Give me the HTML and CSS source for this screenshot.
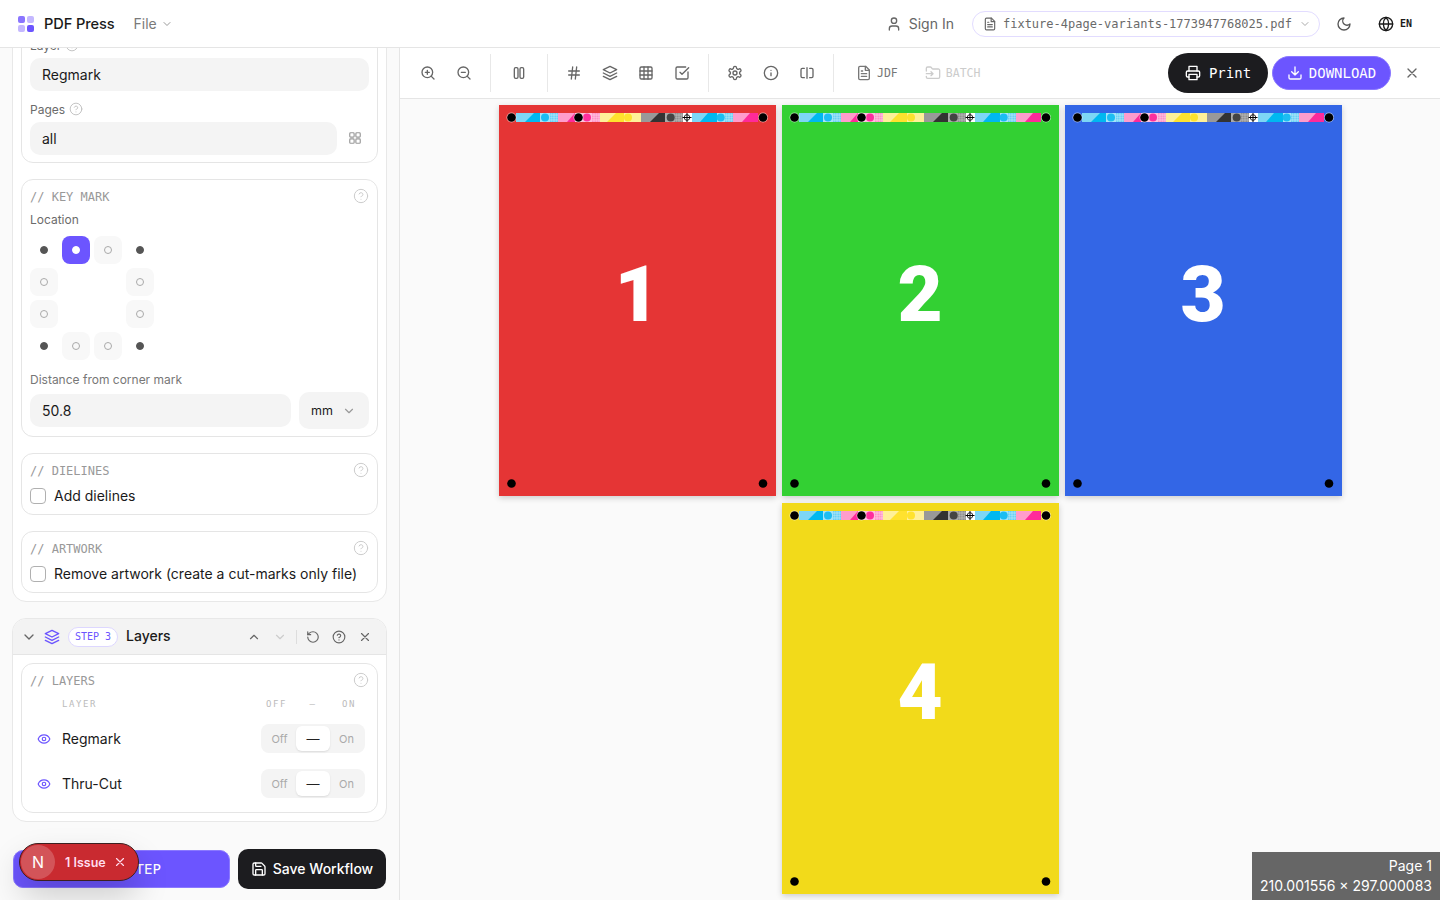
FILE: index.html
```html
<!DOCTYPE html>
<html lang="en">
<head>
<meta charset="utf-8">
<title>PDF Press</title>
<link rel="stylesheet" href="styles.css">
</head>
<body>
<svg class="sprite" xmlns="http://www.w3.org/2000/svg">
  <defs>
    <pattern id="ht-c" width="2.5" height="2.5" patternUnits="userSpaceOnUse"><rect width="2.5" height="2.5" fill="#a6e3f8"/><circle cx="1.25" cy="1.25" r="0.9" fill="#4cc9f5"/></pattern>
    <pattern id="ht-m" width="2.5" height="2.5" patternUnits="userSpaceOnUse"><rect width="2.5" height="2.5" fill="#ffc0de"/><circle cx="1.25" cy="1.25" r="0.9" fill="#ff7dbd"/></pattern>
    <pattern id="ht-k" width="2.5" height="2.5" patternUnits="userSpaceOnUse"><rect width="2.5" height="2.5" fill="#b4b4b4"/><circle cx="1.25" cy="1.25" r="0.9" fill="#7e7e7e"/></pattern>
  </defs>
  <symbol id="i-zoom-in" viewBox="0 0 24 24"><circle cx="11" cy="11" r="8"/><path d="m21 21-4.35-4.35M11 8v6M8 11h6"/></symbol>
  <symbol id="i-zoom-out" viewBox="0 0 24 24"><circle cx="11" cy="11" r="8"/><path d="m21 21-4.35-4.35M8 11h6"/></symbol>
  <symbol id="i-cols" viewBox="0 0 24 24"><rect x="5" y="4" width="5.5" height="16" rx="2"/><rect x="13.5" y="4" width="5.5" height="16" rx="2"/></symbol>
  <symbol id="i-hash" viewBox="0 0 24 24"><path d="M4 9h16M4 15h16M10 3 8 21M16 3l-2 18"/></symbol>
  <symbol id="i-layers" viewBox="0 0 24 24"><path d="M12 2 2 7l10 5 10-5-10-5z"/><path d="m2 17 10 5 10-5"/><path d="m2 12 10 5 10-5"/></symbol>
  <symbol id="i-table" viewBox="0 0 24 24"><rect x="3" y="3" width="18" height="18" rx="2"/><path d="M3 9h18M3 15h18M9 3v18M15 3v18"/></symbol>
  <symbol id="i-check" viewBox="0 0 24 24"><path d="M21 10.5V19a2 2 0 0 1-2 2H5a2 2 0 0 1-2-2V5a2 2 0 0 1 2-2h12.5"/><path d="m9 11 3 3L22 4"/></symbol>
  <symbol id="i-gear" viewBox="0 0 24 24"><path d="M12.22 2h-.44a2 2 0 0 0-2 2v.18a2 2 0 0 1-1 1.73l-.43.25a2 2 0 0 1-2 0l-.15-.08a2 2 0 0 0-2.73.73l-.22.38a2 2 0 0 0 .73 2.73l.15.1a2 2 0 0 1 1 1.72v.51a2 2 0 0 1-1 1.74l-.15.09a2 2 0 0 0-.73 2.73l.22.38a2 2 0 0 0 2.73.73l.15-.08a2 2 0 0 1 2 0l.43.25a2 2 0 0 1 1 1.73V20a2 2 0 0 0 2 2h.44a2 2 0 0 0 2-2v-.18a2 2 0 0 1 1-1.73l.43-.25a2 2 0 0 1 2 0l.15.08a2 2 0 0 0 2.73-.73l.22-.39a2 2 0 0 0-.73-2.73l-.15-.08a2 2 0 0 1-1-1.74v-.5a2 2 0 0 1 1-1.74l.15-.09a2 2 0 0 0 .73-2.73l-.22-.38a2 2 0 0 0-2.73-.73l-.15.08a2 2 0 0 1-2 0l-.43-.25a2 2 0 0 1-1-1.73V4a2 2 0 0 0-2-2z"/><circle cx="12" cy="12" r="3"/></symbol>
  <symbol id="i-info" viewBox="0 0 24 24"><circle cx="12" cy="12" r="10"/><path d="M12 16v-4M12 8h.01"/></symbol>
  <symbol id="i-split" viewBox="0 0 24 24"><path d="M8 19H5c-1 0-2-1-2-2V7c0-1 1-2 2-2h3"/><path d="M16 5h3c1 0 2 1 2 2v10c0 1-1 2-2 2h-3"/><path d="M12 4v16"/></symbol>
  <symbol id="i-file" viewBox="0 0 24 24"><path d="M14.5 2H6a2 2 0 0 0-2 2v16a2 2 0 0 0 2 2h12a2 2 0 0 0 2-2V7.5L14.5 2z"/><path d="M14 2v6h6M16 13H8M16 17H8M10 9H8"/></symbol>
  <symbol id="i-batch" viewBox="0 0 24 24"><path d="M2 9V5a2 2 0 0 1 2-2h3.9a2 2 0 0 1 1.69.9l.81 1.2a2 2 0 0 0 1.67.9H20a2 2 0 0 1 2 2v10a2 2 0 0 1-2 2H4a2 2 0 0 1-2-2v-1"/><path d="M2 13h10M9 16l3-3-3-3"/></symbol>
  <symbol id="i-printer" viewBox="0 0 24 24"><path d="M6 9V2h12v7"/><path d="M6 18H4a2 2 0 0 1-2-2v-5a2 2 0 0 1 2-2h16a2 2 0 0 1 2 2v5a2 2 0 0 1-2 2h-2"/><rect x="6" y="14" width="12" height="8"/></symbol>
  <symbol id="i-download" viewBox="0 0 24 24"><path d="M21 15v4a2 2 0 0 1-2 2H5a2 2 0 0 1-2-2v-4"/><path d="m7 10 5 5 5-5M12 15V3"/></symbol>
  <symbol id="i-x" viewBox="0 0 24 24"><path d="M18 6 6 18M6 6l12 12"/></symbol>
  <symbol id="i-user" viewBox="0 0 24 24"><path d="M19 21v-2a4 4 0 0 0-4-4H9a4 4 0 0 0-4 4v2"/><circle cx="12" cy="7" r="4"/></symbol>
  <symbol id="i-moon" viewBox="0 0 24 24"><path d="M12 3a6 6 0 0 0 9 9 9 9 0 1 1-9-9Z"/></symbol>
  <symbol id="i-globe" viewBox="0 0 24 24"><circle cx="12" cy="12" r="10"/><path d="M12 2a14.5 14.5 0 0 0 0 20 14.5 14.5 0 0 0 0-20M2 12h20"/></symbol>
  <symbol id="i-down" viewBox="0 0 24 24"><path d="m6 9 6 6 6-6"/></symbol>
  <symbol id="i-up" viewBox="0 0 24 24"><path d="m18 15-6-6-6 6"/></symbol>
  <symbol id="i-reset" viewBox="0 0 24 24"><path d="M3 12a9 9 0 1 0 9-9 9.75 9.75 0 0 0-6.74 2.74L3 8"/><path d="M3 3v5h5"/></symbol>
  <symbol id="i-help" viewBox="0 0 24 24"><circle cx="12" cy="12" r="10"/><path d="M9.09 9a3 3 0 0 1 5.83 1c0 2-3 3-3 3M12 17h.01"/></symbol>
  <symbol id="i-eye" viewBox="0 0 24 24"><path d="M2 12s3-7 10-7 10 7 10 7-3 7-10 7-10-7-10-7Z"/><circle cx="12" cy="12" r="3"/></symbol>
  <symbol id="i-save" viewBox="0 0 24 24"><path d="M15.2 3a2 2 0 0 1 1.4.6l3.8 3.8a2 2 0 0 1 .6 1.4V19a2 2 0 0 1-2 2H5a2 2 0 0 1-2-2V5a2 2 0 0 1 2-2z"/><path d="M17 21v-7a1 1 0 0 0-1-1H8a1 1 0 0 0-1 1v7M7 3v4a1 1 0 0 0 1 1h7"/></symbol>
  <symbol id="i-grid" viewBox="0 0 24 24"><rect x="3" y="3" width="7.5" height="7.5" rx="1.5"/><rect x="13.5" y="3" width="7.5" height="7.5" rx="1.5"/><rect x="3" y="13.5" width="7.5" height="7.5" rx="1.5"/><rect x="13.5" y="13.5" width="7.5" height="7.5" rx="1.5"/></symbol>
  <symbol id="marks" viewBox="0 0 277 391">
    <g stroke="none">
      <rect x="41" y="8" width="10" height="9" fill="#a6e3f8"/><rect x="76" y="8" width="17" height="9" fill="#ffc0de"/><rect x="125" y="8" width="8" height="9" fill="#fff099"/><rect x="166" y="8" width="10" height="9" fill="#aaa"/><rect x="218" y="8" width="8" height="9" fill="#a6e3f8"/>
      <rect x="17" y="8" width="9" height="9" fill="#7dd6f5"/><rect x="26" y="8" width="15" height="9" fill="#7dd6f5"/><path d="M26 17l9-9h6v9z" fill="#00b8f0"/>
      <circle cx="46" cy="12.5" r="4" fill="#1cbdf2"/><rect x="51" y="8" width="8" height="9" fill="url(#ht-c)"/>
      <rect x="59" y="8" width="17" height="9" fill="#ff9ccc"/><path d="M68 17l8-9v9z" fill="#ff2a9a"/>
      <circle cx="88" cy="12.5" r="4" fill="#ff2f9e"/><rect x="93" y="8" width="8" height="9" fill="url(#ht-m)"/>
      <rect x="101" y="8" width="16" height="9" fill="#fff099"/><path d="M108 17l9-9v9z" fill="#ffe22e"/><rect x="117" y="8" width="8" height="9" fill="#ffe22e"/>
      <circle cx="129" cy="12.5" r="4" fill="#ffe22e"/><rect x="133" y="8" width="9" height="9" fill="#fff099"/>
      <rect x="142" y="8" width="24" height="9" fill="#999"/><path d="M151 17l9-9h6v9z" fill="#333"/>
      <circle cx="171.7" cy="12.5" r="4" fill="#444"/><rect x="176" y="8" width="8" height="9" fill="url(#ht-k)"/>
      <rect x="184" y="8" width="9" height="9" fill="#fff"/>
      <rect x="193" y="8" width="16" height="9" fill="#7dd6f5"/><path d="M201 17l8-9v9z" fill="#00b8f0"/><rect x="209" y="8" width="9" height="9" fill="#00b8f0"/>
      <circle cx="221.7" cy="12.5" r="4" fill="#1cbdf2"/><rect x="226" y="8" width="8" height="9" fill="url(#ht-c)"/>
      <rect x="234" y="8" width="17" height="9" fill="#ff9ccc"/><path d="M243 17l8-9v9z" fill="#ff2a9a"/><rect x="251" y="8" width="8" height="9" fill="#ff2a9a"/>
      <circle cx="12.5" cy="12.5" r="5" fill="#fff" fill-opacity=".55"/><circle cx="79.5" cy="12.5" r="5" fill="#fff" fill-opacity=".55"/><circle cx="264" cy="12.5" r="5" fill="#fff" fill-opacity=".55"/>
      <circle cx="12.5" cy="12.5" r="4.3" fill="#000"/><circle cx="79.5" cy="12.5" r="4.3" fill="#000"/><circle cx="264" cy="12.5" r="4.3" fill="#000"/>
      <circle cx="12.5" cy="378.5" r="4.3" fill="#000"/><circle cx="264" cy="378.5" r="4.3" fill="#000"/>
    </g>
    <circle cx="188" cy="12.5" r="2.8" fill="none" stroke="#000" stroke-width=".8"/>
    <path d="M183.5 12.5h9M188 8v9" stroke="#000" stroke-width="1" fill="none"/>
  </symbol>
</svg>

<header class="topbar">
  <div class="logo">
    <span class="logo-c a"></span><span class="logo-c b"></span><span class="logo-c b"></span><span class="logo-c a2"></span>
  </div>
  <span class="brand">PDF Press</span>
  <button class="file-menu">File <svg class="ic ic12"><use href="#i-down"/></svg></button>
  <div class="topbar-right">
    <button class="signin"><svg class="ic ic16"><use href="#i-user"/></svg>Sign In</button>
    <div class="file-pill">
      <svg class="ic ic14"><use href="#i-file"/></svg>
      <span class="file-name">fixture-4page-variants-1773947768025.pdf</span>
      <svg class="ic ic12"><use href="#i-down"/></svg>
    </div>
    <svg class="ic ic16 moon"><use href="#i-moon"/></svg>
    <div class="lang"><svg class="ic ic16"><use href="#i-globe"/></svg><span>EN</span></div>
  </div>
</header>

<main class="layout">
  <aside class="side">
    <div class="side-scroll">
      <div class="side-inner">
        <section class="panel panel-body">
          <div class="card">
            <div class="card-title"><span>// REG MARK</span></div>
            <div class="label label-first">Layer <svg class="ic help-s"><use href="#i-help"/></svg></div>
            <div class="input">Regmark</div>
            <div class="label label-pages">Pages <svg class="ic help-s"><use href="#i-help"/></svg></div>
            <div class="row-input">
              <div class="input grow">all</div>
              <svg class="ic ic16 grid-ic"><use href="#i-grid"/></svg>
            </div>
          </div>

          <div class="card">
            <div class="card-title"><span>// KEY MARK</span><svg class="ic help-l"><use href="#i-help"/></svg></div>
            <div class="label label-loc">Location</div>
            <div class="loc-grid">
              <span class="loc fixed"><i></i></span><span class="loc on"><i></i></span><span class="loc"><i></i></span><span class="loc fixed"><i></i></span>
              <span class="loc"><i></i></span><span class="loc none"></span><span class="loc none"></span><span class="loc"><i></i></span>
              <span class="loc"><i></i></span><span class="loc none"></span><span class="loc none"></span><span class="loc"><i></i></span>
              <span class="loc fixed"><i></i></span><span class="loc"><i></i></span><span class="loc"><i></i></span><span class="loc fixed"><i></i></span>
            </div>
            <div class="label label-dist">Distance from corner mark</div>
            <div class="row-dist">
              <div class="input grow">50.8</div>
              <div class="select">mm <svg class="ic ic14"><use href="#i-down"/></svg></div>
            </div>
          </div>

          <div class="card">
            <div class="card-title"><span>// DIELINES</span><svg class="ic help-l"><use href="#i-help"/></svg></div>
            <div class="check-row"><span class="checkbox"></span><span class="check-text">Add dielines</span></div>
          </div>

          <div class="card">
            <div class="card-title"><span>// ARTWORK</span><svg class="ic help-l"><use href="#i-help"/></svg></div>
            <div class="check-row"><span class="checkbox"></span><span class="check-text">Remove artwork (create a cut-marks only file)</span></div>
          </div>
        </section>

        <section class="panel step">
          <div class="step-head">
            <svg class="ic ic16 chev"><use href="#i-down"/></svg>
            <svg class="ic ic16 violet"><use href="#i-layers"/></svg>
            <span class="step-pill">STEP&nbsp;3</span>
            <span class="step-name">Layers</span>
            <span class="step-actions">
              <svg class="ic ic14"><use href="#i-up"/></svg>
              <svg class="ic ic14 faint"><use href="#i-down"/></svg>
              <span class="mini-sep"></span>
              <svg class="ic ic14"><use href="#i-reset"/></svg>
              <svg class="ic ic14"><use href="#i-help"/></svg>
              <svg class="ic ic14"><use href="#i-x"/></svg>
            </span>
          </div>
          <div class="step-body">
            <div class="card card-layers">
              <div class="card-title"><span>// LAYERS</span><svg class="ic help-l"><use href="#i-help"/></svg></div>
              <div class="layer-head">
                <span class="lh-name">LAYER</span>
                <span class="lh-off">OFF</span><span class="lh-dash">–</span><span class="lh-on">ON</span>
              </div>
              <div class="layer-rows">
                <div class="layer-row">
                  <svg class="ic ic14 violet"><use href="#i-eye"/></svg>
                  <span class="layer-name">Regmark</span>
                  <div class="tri"><span>Off</span><b>—</b><span>On</span></div>
                </div>
                <div class="layer-row">
                  <svg class="ic ic14 violet"><use href="#i-eye"/></svg>
                  <span class="layer-name">Thru-Cut</span>
                  <div class="tri"><span>Off</span><b>—</b><span>On</span></div>
                </div>
              </div>
            </div>
          </div>
        </section>
      </div>
    </div>
    <div class="side-foot">
      <button class="btn-next">NEXT STEP</button>
      <button class="btn-save"><svg class="ic ic16"><use href="#i-save"/></svg>Save Workflow</button>
    </div>
    <div class="issue">
      <span class="issue-n">N</span>
      <span class="issue-t">1 Issue</span>
      <svg class="ic ic14"><use href="#i-x"/></svg>
    </div>
  </aside>

  <div class="work">
    <div class="toolbar">
      <div class="tg"><button class="tb"><svg class="ic ic16"><use href="#i-zoom-in"/></svg></button><button class="tb"><svg class="ic ic16"><use href="#i-zoom-out"/></svg></button></div>
      <span class="sep"></span>
      <div class="tg tg-pad"><button class="tb"><svg class="ic ic16"><use href="#i-cols"/></svg></button></div>
      <span class="sep"></span>
      <div class="tg"><button class="tb"><svg class="ic ic16"><use href="#i-hash"/></svg></button><button class="tb"><svg class="ic ic16"><use href="#i-layers"/></svg></button><button class="tb"><svg class="ic ic16"><use href="#i-table"/></svg></button><button class="tb"><svg class="ic ic16"><use href="#i-check"/></svg></button></div>
      <span class="sep"></span>
      <div class="tg"><button class="tb"><svg class="ic ic16"><use href="#i-gear"/></svg></button><button class="tb"><svg class="ic ic16"><use href="#i-info"/></svg></button><button class="tb"><svg class="ic ic16"><use href="#i-split"/></svg></button></div>
      <span class="sep"></span>
      <button class="tt jdf"><svg class="ic ic16"><use href="#i-file"/></svg>JDF</button>
      <button class="tt batch"><svg class="ic ic16"><use href="#i-batch"/></svg>BATCH</button>
      <div class="tool-right">
        <button class="btn-print"><svg class="ic ic16"><use href="#i-printer"/></svg>Print</button>
        <button class="btn-dl"><svg class="ic ic16"><use href="#i-download"/></svg>DOWNLOAD</button>
        <button class="tb tb-x"><svg class="ic ic16"><use href="#i-x"/></svg></button>
      </div>
    </div>
    <div class="canvas">
      <div class="pages">
        <div class="page red"><svg class="marks"><use href="#marks"/></svg><span>1</span></div>
        <div class="page green"><svg class="marks"><use href="#marks"/></svg><span>2</span></div>
        <div class="page blue"><svg class="marks"><use href="#marks"/></svg><span>3</span></div>
        <div class="page yellow col2"><svg class="marks"><use href="#marks"/></svg><span>4</span></div>
      </div>
      <div class="page-info">Page 1<br>210.001556 × 297.000083</div>
    </div>
  </div>
</main>
</body>
</html>
```
FILE: styles.css
```css
* { box-sizing: border-box; }
html, body { margin: 0; height: 100%; overflow: hidden; }
body { font-family: Inter, "Liberation Sans", sans-serif; font-size: 14px; color: #1a1a1a; background: #fafafa; display: flex; flex-direction: column; width: 1440px; height: 900px; }
button { font: inherit; border: 0; background: none; padding: 0; color: inherit; }
.sprite { width: 0; height: 0; position: absolute; }
.ic { fill: none; stroke: currentColor; stroke-width: 2; stroke-linecap: round; stroke-linejoin: round; flex: none; display: block; }
.ic12 { width: 12px; height: 12px; }
.ic14 { width: 14px; height: 14px; }
.ic16 { width: 16px; height: 16px; }
.ic18 { width: 18px; height: 18px; }
.violet { color: #6c55ff; }

/* top bar */
.topbar { height: 48px; flex: none; background: #fff; border-bottom: 1px solid #e5e5e5; display: flex; align-items: center; padding-left: 18px; }
.logo { width: 16px; height: 16px; display: grid; grid-template-columns: 7px 7px; gap: 2px; margin-right: 10px; }
.logo-c { border-radius: 2px; width: 7px; height: 7px; }
.logo-c.a { background: #8a75ff; }
.logo-c.b { background: #c4b8ff; }
.logo-c.a2 { background: #6c55ff; }
.brand { font-weight: 500; font-size: 14.6px; letter-spacing: -.1px; color: #1a1a1a; margin-right: 19px; }
.file-menu { display: flex; align-items: center; gap: 4px; color: #7a7a7a; font-size: 14px; }
.file-menu .ic { color: #999; }
.topbar-right { margin-left: auto; display: flex; align-items: center; padding-right: 28px; }
.signin { display: flex; align-items: center; gap: 7px; color: #666; font-size: 14px; margin-right: 18px; }
.file-pill { width: 348px; height: 26px; border: 1.5px solid #e2dcff; border-radius: 13px; display: flex; align-items: center; padding-left: 10px; color: #666; background: #fff; }
.file-name { font-family: "DejaVu Sans Mono", monospace; font-size: 12px; margin: 0 7px 0 6px; color: #6a6a6a; white-space: nowrap; }
.file-pill .ic12 { color: #aaa; }
.moon { color: #555; margin-left: 16px; }
.lang { display: flex; align-items: center; gap: 6px; margin-left: 26px; color: #1a1a1a; }
.lang span { font-family: "DejaVu Sans Mono", monospace; font-size: 10px; font-weight: 700; }

/* layout */
.layout { flex: 1; display: flex; min-height: 0; }
.side { width: 400px; flex: none; border-right: 1px solid #e5e5e5; background: #fafafa; display: flex; flex-direction: column; position: relative; }
.side-scroll { flex: 1; overflow: hidden; min-height: 0; padding: 0 12px 0 12px; }
.side-inner { margin-top: -52px; display: flex; flex-direction: column; gap: 16px; }
.panel { background: #fff; border: 1px solid #e8e8e8; border-radius: 14px; overflow: hidden; width: 375px; }
.panel-body { padding: 8px; display: flex; flex-direction: column; gap: 16px; }
.card { border: 1px solid #e5e5e5; border-radius: 12px; background: #fff; padding: 8px 8px 7px; }
.card-title { height: 18px; display: flex; align-items: center; justify-content: space-between; font-family: "DejaVu Sans Mono", monospace; font-size: 12px; color: #999; }
.help-l { width: 16px; height: 16px; color: #ccc; stroke-width: 1.5; margin-bottom: 2px; }
.help-s { width: 14px; height: 14px; color: #bbb; stroke-width: 1.5; margin-left: 4px; }
.label { height: 16px; padding-bottom: 2px; display: flex; align-items: center; font-size: 12px; color: #6b6b6b; }
.label-first { margin-top: 6px; margin-bottom: 4px; }
.label-pages { margin-top: 11px; margin-bottom: 4px; }
.label-loc { margin-top: 6px; margin-bottom: 8px; }
.label-dist { margin-top: 12px; margin-bottom: 4px; color: #777; }
.input { height: 33px; border-radius: 10px; background: #f4f4f4; display: flex; align-items: center; padding-left: 12px; font-size: 14px; color: #1a1a1a; }
.grow { flex: 1; }
.row-input { display: flex; align-items: center; gap: 10px; }
.grid-ic { width: 14px; height: 14px; color: #999; margin: 0 7px 2px 1px; }
.row-dist { display: flex; align-items: center; gap: 8px; }
.select { width: 70px; height: 37px; border-radius: 10px; background: #f4f4f4; display: flex; align-items: center; justify-content: space-between; padding: 0 13px 0 12px; font-size: 12.5px; }
.select .ic { color: #999; }
.loc-grid { display: grid; grid-template-columns: repeat(4, 28px); grid-auto-rows: 28px; gap: 4px; }
.loc { border-radius: 8px; background: #f8f8f8; display: flex; align-items: center; justify-content: center; }
.loc i { width: 8px; height: 8px; border-radius: 50%; border: 1px solid #aaa; display: block; }
.loc.fixed { background: none; }
.loc.fixed i { background: #555; border-color: #555; }
.loc.on { background: #6c55ff; }
.loc.on i { background: #fff; border-color: #fff; }
.loc.none { background: none; }
.check-row { height: 20px; margin-top: 6px; margin-bottom: 1px; display: flex; align-items: center; gap: 8px; font-size: 14px; color: #1a1a1a; white-space: nowrap; }
.check-text { margin-bottom: 2px; }
.checkbox { width: 16px; height: 16px; border: 1px solid #b0b0b0; border-radius: 4px; background: #fff; flex: none; }

/* step */
.step-head { height: 36px; background: #f3f3f3; border-bottom: 1px solid #e5e5e5; display: flex; align-items: center; padding-left: 8px; }
.chev { color: #666; }
.step-head .violet { margin-left: 7px; }
.step-pill { height: 20px; width: 50px; margin-left: 8px; border: 1.5px solid #ddd7ff; border-radius: 10px; background: #fff; font-family: "DejaVu Sans Mono", monospace; font-size: 10px; color: #6c55ff; display: flex; align-items: center; justify-content: center; white-space: nowrap; }
.step-name { margin-left: 8px; margin-bottom: 2px; font-weight: 500; font-size: 14px; }
.step-actions { margin-left: auto; display: flex; align-items: center; color: #666; padding-right: 14px; gap: 12px; }
.faint { color: #ccc; }
.mini-sep { width: 1px; height: 14px; background: #ddd; margin: 0 -3px 0 -3px; }
.step-body { padding: 8px; }
.card-layers { padding-bottom: 6px; }
.layer-head { height: 15px; margin-top: 6px; display: flex; align-items: center; font-family: "DejaVu Sans Mono", monospace; font-size: 9px; letter-spacing: 1.6px; color: #bbb; }
.lh-name { margin-left: 32px; }
.lh-off { margin-left: auto; width: 22px; }
.lh-dash { width: 36px; text-align: center; margin-left: 7px; }
.lh-on { margin-left: 11px; margin-right: 13px; }
.layer-rows { margin-top: 5px; }
.layer-row { height: 45px; display: flex; align-items: center; }
.layer-row .violet { margin-left: 7px; }
.layer-name { margin-left: 11px; font-size: 14px; }
.tri { margin-left: auto; margin-right: 4px; width: 104px; height: 29px; border-radius: 8px; background: #f4f4f4; display: flex; align-items: center; font-size: 11px; color: #aaa; padding: 2px; }
.tri span { flex: 1; text-align: center; }
.tri b { width: 34px; height: 100%; background: #fff; border-radius: 6px; box-shadow: 0 1px 2px rgba(0,0,0,.1); display: flex; align-items: center; justify-content: center; color: #222; font-weight: 400; font-size: 13px; }

/* foot */
.side-foot { height: 60px; flex: none; display: flex; align-items: center; gap: 8px; padding: 0 13px 2px; }
.btn-next { width: 217px; height: 38px; border-radius: 10px; background: #6c55ff; border: 1px solid #8a78ff; color: #fff; font-family: "DejaVu Sans Mono", monospace; font-size: 14px; padding-left: 71px; text-align: left; white-space: nowrap; }
.btn-save { width: 148px; height: 40px; border-radius: 10px; background: #1c1c1f; color: #fff; display: flex; align-items: center; justify-content: center; gap: 6px; font-size: 14px; font-weight: 500; white-space: nowrap; padding-bottom: 1px; }
.issue { position: absolute; left: 19px; top: 795px; width: 120px; height: 38px; border-radius: 19px; background: #c92a30; border: 1px solid #3c2020; color: #fff; display: flex; align-items: center; padding-left: 1px; box-shadow: 0 16px 32px rgba(0,0,0,.18); }
.issue-n { width: 34px; height: 34px; border-radius: 50%; background: rgba(255,255,255,.2); display: flex; align-items: center; justify-content: center; font-size: 16px; font-weight: 400; }
.issue-t { margin-left: 10px; font-size: 12.5px; font-weight: 600; color: #fde; white-space: nowrap; }
.issue .ic { margin-left: 7px; color: #fde; }

/* work area */
.work { flex: 1; min-width: 0; display: flex; flex-direction: column; position: relative; }
.toolbar { height: 51px; flex: none; background: #fff; border-bottom: 1px solid #e5e5e5; display: flex; align-items: center; padding-left: 10px; color: #666; }
.tg { display: flex; }
.tg-pad { padding: 0 2px; }
.tb { width: 36px; height: 36px; display: flex; align-items: center; justify-content: center; color: #666; }
.sep { width: 1px; height: 38px; background: #e8e8e8; margin: 0 8px; flex: none; }
.tt { display: flex; align-items: center; gap: 5px; font-family: "DejaVu Sans Mono", monospace; font-size: 11.5px; white-space: nowrap; }
.jdf { margin-left: 14px; color: #777; }
.batch { margin-left: 27px; color: #ccc; }
.tool-right { margin-left: auto; display: flex; align-items: center; gap: 4px; padding-right: 16px; }
.btn-print { width: 100px; height: 40px; border-radius: 20px; background: #1c1c1f; color: #fff; display: flex; align-items: center; justify-content: center; gap: 8px; font-family: "DejaVu Sans Mono", monospace; font-size: 14px; }
.btn-dl { width: 119px; height: 34px; border-radius: 17px; background: #6c55ff; border: 1px solid #8a78ff; color: #fff; display: flex; align-items: center; justify-content: center; gap: 6px; font-family: "DejaVu Sans Mono", monospace; font-size: 14px; }
.tb-x { width: 24px; height: 24px; margin-left: 5px; }
.canvas { flex: 1; min-height: 0; overflow: hidden; background: #fafafa; padding-top: 6px; display: flex; justify-content: center; align-items: flex-start; position: relative; }
.pages { display: grid; grid-template-columns: repeat(3, 277px); grid-auto-rows: 391px; column-gap: 6px; row-gap: 7px; }
.page { position: relative; display: flex; align-items: center; justify-content: center; box-shadow: 0 2px 6px rgba(0,0,0,.18); color: #fff; font-family: Roboto, "Liberation Sans", sans-serif; font-weight: 900; font-size: 78px; }
.page span { position: relative; top: -6px; }
.marks { position: absolute; inset: 0; width: 100%; height: 100%; }
.red { background: #e53535; }
.green { background: #33d033; }
.blue { background: #3366e6; }
.yellow { background: #f2da1a; }
.col2 { grid-column: 2; }
.page-info { position: absolute; right: 0; bottom: 0; width: 188px; height: 48px; background: #666; color: #fff; font-size: 14px; line-height: 20px; text-align: right; padding: 4px 8px 0 0; white-space: nowrap; }
```
